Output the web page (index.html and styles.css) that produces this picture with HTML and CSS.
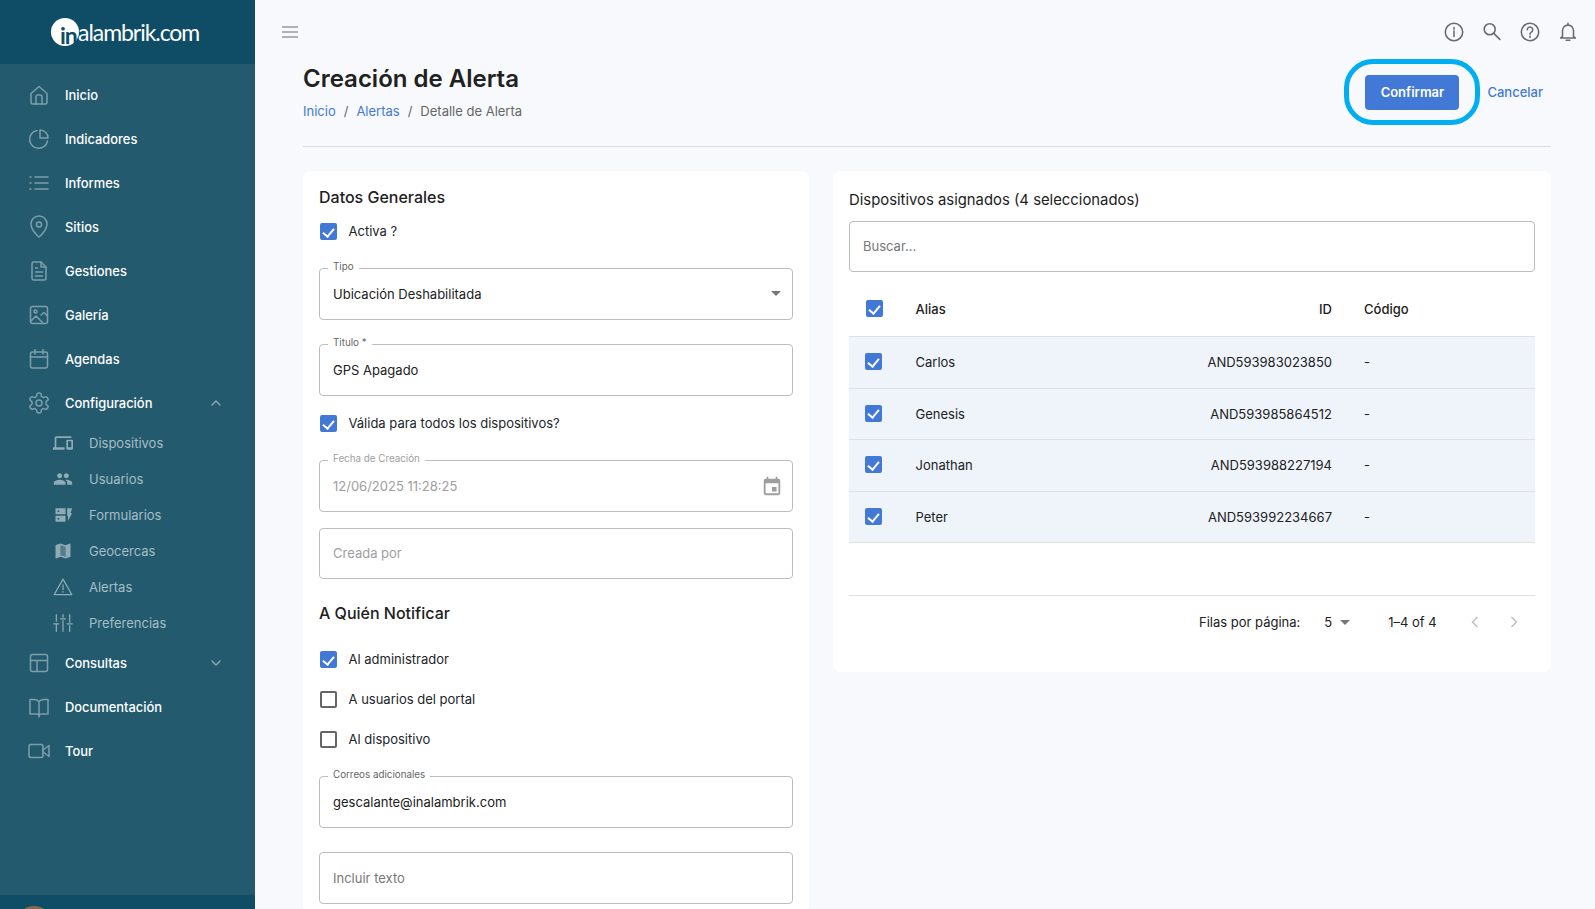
FILE: index.html
```html
<!DOCTYPE html>
<html lang="es">
<head>
<meta charset="utf-8">
<title>Creación de Alerta</title>
<link rel="stylesheet" href="styles.css">
</head>
<body>
<div class="app">
  <aside class="sidebar">
    <div class="brand">
      <span class="brand-dot">in</span><span class="brand-text">alambrik.com</span>
    </div>
    <nav class="nav">
      <a class="nav-item"><svg class="nav-icon" viewBox="0 0 24 24"><path d="M4 10.500 12 3.500l8 7V19a2 2 0 0 1-2 2H6a2 2 0 0 1-2-2z"/><path d="M9 21v-7a2 2 0 0 1 2-2h2a2 2 0 0 1 2 2v7"/></svg><span>Inicio</span></a>
      <a class="nav-item"><svg class="nav-icon" viewBox="0 0 24 24"><path d="M10 3.500A9 9 0 1 0 20.500 14"/><path d="M13 3a8 8 0 0 1 8 8h-8z"/></svg><span>Indicadores</span></a>
      <a class="nav-item"><svg class="nav-icon" viewBox="0 0 24 24"><path d="M8 6h13M8 12h13M8 18h13M3 6h1M3 12h1M3 18h1"/></svg><span>Informes</span></a>
      <a class="nav-item"><svg class="nav-icon" viewBox="0 0 24 24"><path d="M12 22s-8-6.500-8-13a8 8 0 0 1 16 0c0 6.500-8 13-8 13z"/><circle cx="12" cy="9.500" r="2.500"/></svg><span>Sitios</span></a>
      <a class="nav-item"><svg class="nav-icon" viewBox="0 0 24 24"><path d="M5 4.500A1.500 1.500 0 0 1 6.500 3H14l5 5v11.500a1.500 1.500 0 0 1-1.500 1.500h-11A1.500 1.500 0 0 1 5 19.500z"/><path d="M14 3v5h5M8.500 13h7M8.500 17h7M8.500 9h2"/></svg><span>Gestiones</span></a>
      <a class="nav-item"><svg class="nav-icon" viewBox="0 0 24 24"><rect x="3.500" y="3.500" width="17" height="17" rx="2"/><circle cx="8.500" cy="8.500" r="1.500"/><path d="m4 18 5-5 7 7M14 12l3-2.500 3.500 3.500"/></svg><span>Galería</span></a>
      <a class="nav-item"><svg class="nav-icon" viewBox="0 0 24 24"><rect x="3.500" y="5" width="17" height="16" rx="2"/><path d="M3.500 10h17M8 2.500V7M16 2.500V7"/></svg><span>Agendas</span></a>
      <a class="nav-item"><svg class="nav-icon" viewBox="0 0 24 24"><path d="M12.220 2h-.44a2 2 0 0 0-2 2v.18a2 2 0 0 1-1 1.730l-.43.25a2 2 0 0 1-2 0l-.15-.08a2 2 0 0 0-2.730.73l-.22.38a2 2 0 0 0 .73 2.730l.15.1a2 2 0 0 1 1 1.720v.51a2 2 0 0 1-1 1.740l-.15.09a2 2 0 0 0-.73 2.730l.22.38a2 2 0 0 0 2.730.73l.15-.08a2 2 0 0 1 2 0l.43.25a2 2 0 0 1 1 1.730V20a2 2 0 0 0 2 2h.44a2 2 0 0 0 2-2v-.18a2 2 0 0 1 1-1.730l.43-.25a2 2 0 0 1 2 0l.15.08a2 2 0 0 0 2.730-.73l.22-.39a2 2 0 0 0-.73-2.730l-.15-.08a2 2 0 0 1-1-1.740v-.5a2 2 0 0 1 1-1.740l.15-.09a2 2 0 0 0 .73-2.730l-.22-.38a2 2 0 0 0-2.730-.73l-.15.08a2 2 0 0 1-2 0l-.43-.25a2 2 0 0 1-1-1.730V4a2 2 0 0 0-2-2z"/><circle cx="12" cy="12" r="3"/></svg><span>Configuración</span><svg class="nav-chevron" viewBox="0 0 12 12"><path d="m2 8 4-4 4 4"/></svg></a>
      <div class="subnav">
        <a class="sub-item"><svg class="sub-icon" viewBox="0 0 24 24"><path d="M4 6h18V4H4c-1.100 0-2 .9-2 2v11H0v3h14v-3H4V6zm19 2h-6c-.55 0-1 .45-1 1v10c0 .55.45 1 1 1h6c.55 0 1-.45 1-1V9c0-.55-.45-1-1-1zm-1 9h-4v-7h4v7z"/></svg><span>Dispositivos</span></a>
        <a class="sub-item"><svg class="sub-icon" viewBox="0 0 24 24"><path d="M16 11c1.660 0 2.990-1.340 2.990-3S17.660 5 16 5s-3 1.340-3 3 1.340 3 3 3zm-8 0c1.660 0 2.990-1.340 2.990-3S9.660 5 8 5 5 6.340 5 8s1.340 3 3 3zm0 2c-2.330 0-7 1.170-7 3.500V19h14v-2.500c0-2.330-4.670-3.500-7-3.500zm8 0c-.29 0-.62.02-.97.05 1.160.84 1.970 1.970 1.970 3.450V19h6v-2.500c0-2.330-4.670-3.500-7-3.500z"/></svg><span>Usuarios</span></a>
        <a class="sub-item"><svg class="sub-icon" viewBox="0 0 24 24"><path fill-rule="evenodd" d="M3 4h12v7H3zM5.500 6.500v2h2v-2zM3 13h12v7H3zM5.500 15.500v2h2v-2z"/><path d="M17 4h6l-2 6h2l-5 9v-6h-1z"/></svg><span>Formularios</span></a>
        <a class="sub-item"><svg class="sub-icon" viewBox="0 0 24 24"><path fill-rule="evenodd" d="M20.500 3l-.16.03L15 5.100 9 3 3.360 4.900c-.21.07-.36.25-.36.48V20.500c0 .28.22.5.5.5l.16-.03L9 18.900l6 2.100 5.640-1.900c.21-.07.36-.25.36-.48V3.500c0-.28-.22-.5-.5-.5zM15 19l-6-2.110V5l6 2.110V19z"/><path class="map-panel" d="M15 19l-6-2.110V5l6 2.110V19z"/></svg><span>Geocercas</span></a>
        <a class="sub-item"><svg class="sub-icon sub-stroke" viewBox="0 0 24 24"><path d="M12 2.500 1.500 21h21z"/><path d="M12 9.500v5.500M12 17.500v.5"/></svg><span>Alertas</span></a>
        <a class="sub-item"><svg class="sub-icon sub-stroke" viewBox="0 0 24 24"><path d="M4 2v8M4 14v8M12 2v3M12 9v13M20 2v9M20 15v7M1 13h6M9 7h6M17 13h6"/></svg><span>Preferencias</span></a>
      </div>
      <a class="nav-item"><svg class="nav-icon" viewBox="0 0 24 24"><rect x="3.500" y="3.500" width="17" height="17" rx="2"/><path d="M3.500 9.500h17M10 9.500v11"/></svg><span>Consultas</span><svg class="nav-chevron" viewBox="0 0 12 12"><path d="m2 4 4 4 4-4"/></svg></a>
      <a class="nav-item"><svg class="nav-icon" viewBox="0 0 24 24"><path d="M12 6.500c-1.500-1.500-3-2-5-2H3V19h6c1.500 0 3 .5 3 2 0-1.500 1.500-2 3-2h6V4.500h-4c-2 0-3.500.5-5 2zM12 6.500V22"/></svg><span>Documentación</span></a>
      <a class="nav-item"><svg class="nav-icon" viewBox="0 0 24 24"><rect x="2" y="5.500" width="14" height="13" rx="2"/><path d="m16 11 6-4.500v11L16 13z"/></svg><span>Tour</span></a>
    </nav>
    <div class="side-foot"><span class="avatar"></span></div>
  </aside>

  <main class="main">
    <header class="topbar">
      <svg class="menu-icon" viewBox="0 0 16 12"><path d="M0 1h16M0 6h16M0 11h16"/></svg>
      <div class="top-icons">
        <svg class="top-icon" viewBox="0 0 24 24"><circle cx="12" cy="12" r="9.500"/><path d="M12 11v6M12 7v2"/></svg>
        <svg class="top-icon" viewBox="0 0 24 24"><circle cx="9.500" cy="9" r="6"/><path d="m14 13.500 6.500 6.500"/></svg>
        <svg class="top-icon" viewBox="0 0 24 24"><circle cx="12" cy="12" r="9.500"/><path d="M9 9.500a3 3 0 1 1 4.500 2.600c-1 .6-1.500 1.200-1.500 2.400M12 16.500v1.500"/></svg>
        <svg class="top-icon" viewBox="0 0 24 24"><path d="M6 17v-6.500a6 6 0 0 1 12 0V17l2 1.500H4zM10 21h4M12 2.500v2"/></svg>
      </div>
    </header>

    <section class="content">
      <div class="page-head">
        <div>
          <h1 class="page-title">Creación de Alerta</h1>
          <div class="crumbs"><a class="link">Inicio</a><span class="sep">/</span><a class="link">Alertas</a><span class="sep">/</span><span>Detalle de Alerta</span></div>
        </div>
        <div class="actions">
          <div class="confirm-wrap">
            <button class="btn-primary">Confirmar</button>
            <span class="ring"></span>
          </div>
          <a class="link cancel">Cancelar</a>
        </div>
      </div>

      <div class="columns">
        <div class="card form-card">
          <h2 class="card-title">Datos Generales</h2>
          <div class="check-row mt15"><span class="check on"></span>Activa ?</div>
          <div class="field mt28"><label class="field-label">Tipo</label><span>Ubicación Deshabilitada</span><span class="caret field-end"></span></div>
          <div class="field mt24"><label class="field-label">Titulo *</label><span>GPS Apagado</span></div>
          <div class="check-row mt18"><span class="check on"></span>Válida para todos los dispositivos?</div>
          <div class="field mt28 is-muted"><label class="field-label">Fecha de Creación</label><span>12/06/2025 11:28:25</span>
            <svg class="field-end cal" viewBox="0 0 24 24"><path d="M19 4h-1V2h-2v2H8V2H6v2H5a2 2 0 0 0-2 2v14a2 2 0 0 0 2 2h14a2 2 0 0 0 2-2V6a2 2 0 0 0-2-2zm0 16H5V9h14v11zM12 13h5v5h-5z"/></svg>
          </div>
          <div class="field field-short mt16 is-muted"><span>Creada por</span></div>
          <h2 class="card-title mt24">A Quién Notificar</h2>
          <div class="check-row mt27"><span class="check on"></span>Al administrador</div>
          <div class="check-row mt22"><span class="check"></span>A usuarios del portal</div>
          <div class="check-row mt22"><span class="check"></span>Al dispositivo</div>
          <div class="field mt28"><label class="field-label">Correos adicionales</label><span>gescalante@inalambrik.com</span></div>
          <div class="field mt24 is-hint"><span>Incluir texto</span></div>
        </div>

        <div class="card table-card">
          <h2 class="table-title">Dispositivos asignados (4 seleccionados)</h2>
          <div class="field field-short search is-hint"><span>Buscar...</span></div>
          <div class="t-head">
            <span class="t-check head-check"><span class="check on"></span></span>
            <span>Alias</span>
            <span class="t-id">ID</span>
            <span>Código</span>
          </div>
          <div class="t-row"><span class="t-check"><span class="check on"></span></span><span>Carlos</span><span class="t-id">AND593983023850</span><span>-</span></div>
          <div class="t-row"><span class="t-check"><span class="check on"></span></span><span>Genesis</span><span class="t-id">AND593985864512</span><span>-</span></div>
          <div class="t-row"><span class="t-check"><span class="check on"></span></span><span>Jonathan</span><span class="t-id">AND593988227194</span><span>-</span></div>
          <div class="t-row"><span class="t-check"><span class="check on"></span></span><span>Peter</span><span class="t-id">AND593992234667</span><span>-</span></div>
          <div class="pager">
            <span class="page-label">Filas por página:</span>
            <span class="page-size">5<span class="caret"></span></span>
            <span class="page-range">1–4 of 4</span>
            <svg class="page-arrow" viewBox="0 0 10 14"><path d="M7.500 2 2.500 7l5 5"/></svg>
            <svg class="page-arrow next" viewBox="0 0 10 14"><path d="m2.500 2 5 5-5 5"/></svg>
          </div>
        </div>
      </div>
    </section>
  </main>
</div>
</body>
</html>
```

FILE: styles.css
```css
* { box-sizing: border-box; }
html, body { margin: 0; height: 100%; }
body {
  font-family: Inter, "Liberation Sans", sans-serif;
  font-size: 13px;
  color: #212529;
  background: #f7f9fc;
  overflow: hidden;
}
.app { display: flex; height: 909px; overflow: hidden; }

/* Sidebar */
.sidebar { width: 255px; flex: none; display: flex; flex-direction: column; background: #235a6d; color: #fff; }
.brand { height: 64px; flex: none; display: flex; align-items: center; padding-left: 51px; background: #0f4d66; }
.brand-dot {
  width: 28px; height: 28px; border-radius: 50%; background: #fff; color: #0f4d66;
  font-family: Lato, sans-serif; font-size: 23px; font-weight: 700; line-height: 28px;
  padding-left: 9px; padding-top: 3px; letter-spacing: -1px; flex: none; white-space: nowrap;
}
.brand-text { font-family: Lato, sans-serif; font-size: 23px; letter-spacing: -1.050px; margin-left: -1px; color: #fff; }
.nav { flex: 1; padding-top: 9px; }
.nav-item { display: flex; align-items: center; height: 44px; padding-left: 27px; padding-right: 33px; font-weight: 500; font-size: 12.900px; }
.nav-icon { width: 24px; height: 24px; margin-right: 14px; flex: none; fill: none; stroke: #7d9eab; stroke-width: 1.500; stroke-linecap: round; stroke-linejoin: round; }
.nav-chevron { width: 12px; height: 12px; margin-left: auto; fill: none; stroke: #93aeb9; stroke-width: 1.300; stroke-linecap: round; stroke-linejoin: round; }
.subnav { display: flex; flex-direction: column; }
.sub-item { display: flex; align-items: center; height: 36px; padding-left: 53px; color: #a6bec7; font-size: 13px; }
.sub-icon { width: 20px; height: 20px; margin-right: 16px; flex: none; fill: #8fabb6; }
.sub-stroke { fill: none; stroke: #8fabb6; stroke-width: 1.500; stroke-linecap: round; stroke-linejoin: round; }
.map-panel { opacity: .45; }
.side-foot { height: 14px; flex: none; background: #0f4d66; overflow: hidden; padding: 11px 0 0 16px; }
.avatar { display: block; width: 36px; height: 36px; border-radius: 50%; background: #8a6a4c; }

/* Main */
.main { flex: 1; min-width: 0; display: flex; flex-direction: column; }
.topbar { height: 64px; flex: none; display: flex; align-items: center; justify-content: space-between; padding: 0 16px 0 27px; }
.menu-icon { width: 16px; height: 12px; fill: none; stroke: #9a9a9a; stroke-width: 1.500; }
.top-icons { display: flex; gap: 16px; }
.top-icon { width: 22px; height: 22px; fill: none; stroke: #6a6a6a; stroke-width: 1.700; stroke-linecap: round; stroke-linejoin: round; }
.content { padding: 0 44px 0 48px; }
.page-head { display: flex; justify-content: space-between; align-items: flex-start; height: 83px; border-bottom: 1px solid #d9dce1; }
.page-title { margin: 0; font-size: 24px; line-height: 30px; font-weight: 600; color: #212121; }
.crumbs { margin-top: 7px; display: flex; color: #666; font-size: 13px; line-height: 20px; }
.sep { margin: 0 8px; }
.link { color: #4379d6; }
.actions { display: flex; align-items: center; margin-top: 11px; margin-right: 8px; }
.confirm-wrap { position: relative; margin-right: 28px; }
.btn-primary { display: block; width: 94px; height: 35px; padding: 0 0 2px; border: 0; border-radius: 4px; background: #4379d6; color: #fff; font: 600 13px Inter, sans-serif; }
.ring { position: absolute; left: -21px; top: -16px; width: 136px; height: 66px; border: 5px solid #03aef0; border-radius: 29px; }
.cancel { font-size: 13px; font-weight: 500; margin-bottom: 2px; }

.columns { display: grid; grid-template-columns: 506px 718px; gap: 24px; margin-top: 24px; align-items: start; }
.card { background: #fff; border-radius: 8px; padding: 16px; }
.form-card { height: 760px; }
.card-title { margin: 0; font-size: 16px; line-height: 20px; font-weight: 500; color: #212121; }
.check-row { display: flex; align-items: center; height: 18px; padding-left: .5px; }
.check { position: relative; width: 17px; height: 17px; margin-top: 1px; margin-right: 12px; flex: none; border: 2px solid #666; border-radius: 2px; background: #fff; }
.check.on { background: #4379d6; border-color: #4379d6; }
.check.on::after { content: ""; position: absolute; left: 3.500px; top: .5px; width: 5px; height: 9px; border: solid #fff; border-width: 0 2px 2px 0; transform: rotate(40deg); }
.field { position: relative; display: flex; align-items: center; height: 52px; padding: 0 13px 1px; border: 1px solid #bdbdbd; border-radius: 4px; color: #212121; }
.field-short { height: 51px; }
.field-label { position: absolute; left: 8px; top: -8px; padding: 0 5px; background: #fff; font-size: 9.800px; line-height: 12px; color: #666; }
.field-end { margin-left: auto; }
.is-muted { color: #9e9e9e; }
.is-muted .field-label { color: #9e9e9e; }
.is-hint { color: #777; }
.caret { display: inline-block; width: 0; height: 0; border: 5px solid transparent; border-top-color: #777; border-bottom: 0; }
.field > .caret { margin-right: -2px; }
.cal { width: 22px; height: 22px; fill: #9e9e9e; margin-right: -4px; }

.mt15 { margin-top: 15px; }
.mt16 { margin-top: 16px; }
.mt18 { margin-top: 18px; }
.mt22 { margin-top: 22px; }
.mt24 { margin-top: 24px; }
.mt27 { margin-top: 27px; }
.mt28 { margin-top: 28px; }

.table-card { height: 501px; }
.table-title { margin: 0; font-size: 14.850px; line-height: 26px; font-weight: 400; color: #212121; }
.search { margin-top: 8px; }
.t-head, .t-row { display: grid; grid-template-columns: 66.500px minmax(0, 1fr) 162.500px 171px; align-items: center; }
.t-head { height: 55px; margin-top: 10px; font-weight: 500; color: #212121; border-bottom: 1px solid #e0e0e0; }
.t-row { height: 51.600px; background: #eff4fb; border-bottom: 1px solid #e0e0e0; color: #212121; }
.t-check { padding-left: 15.500px; display: flex; }
.head-check { padding-left: 16.500px; }
.t-id { justify-self: end; padding-right: 32px; white-space: nowrap; }
.t-check .check { margin: -1px 0 0; }
.pager { display: flex; align-items: center; height: 53px; margin-top: 52px; border-top: 1px solid #e0e0e0; color: #212121; }
.page-label { margin-left: 350px; }
.page-size { display: inline-flex; align-items: center; gap: 8px; margin-left: 24px; }
.page-range { margin-left: 38px; }
.page-arrow { width: 10px; height: 14px; margin-left: 33px; fill: none; stroke: #bdbdbd; stroke-width: 1.500; }
.next { margin-left: 29px; }
```
